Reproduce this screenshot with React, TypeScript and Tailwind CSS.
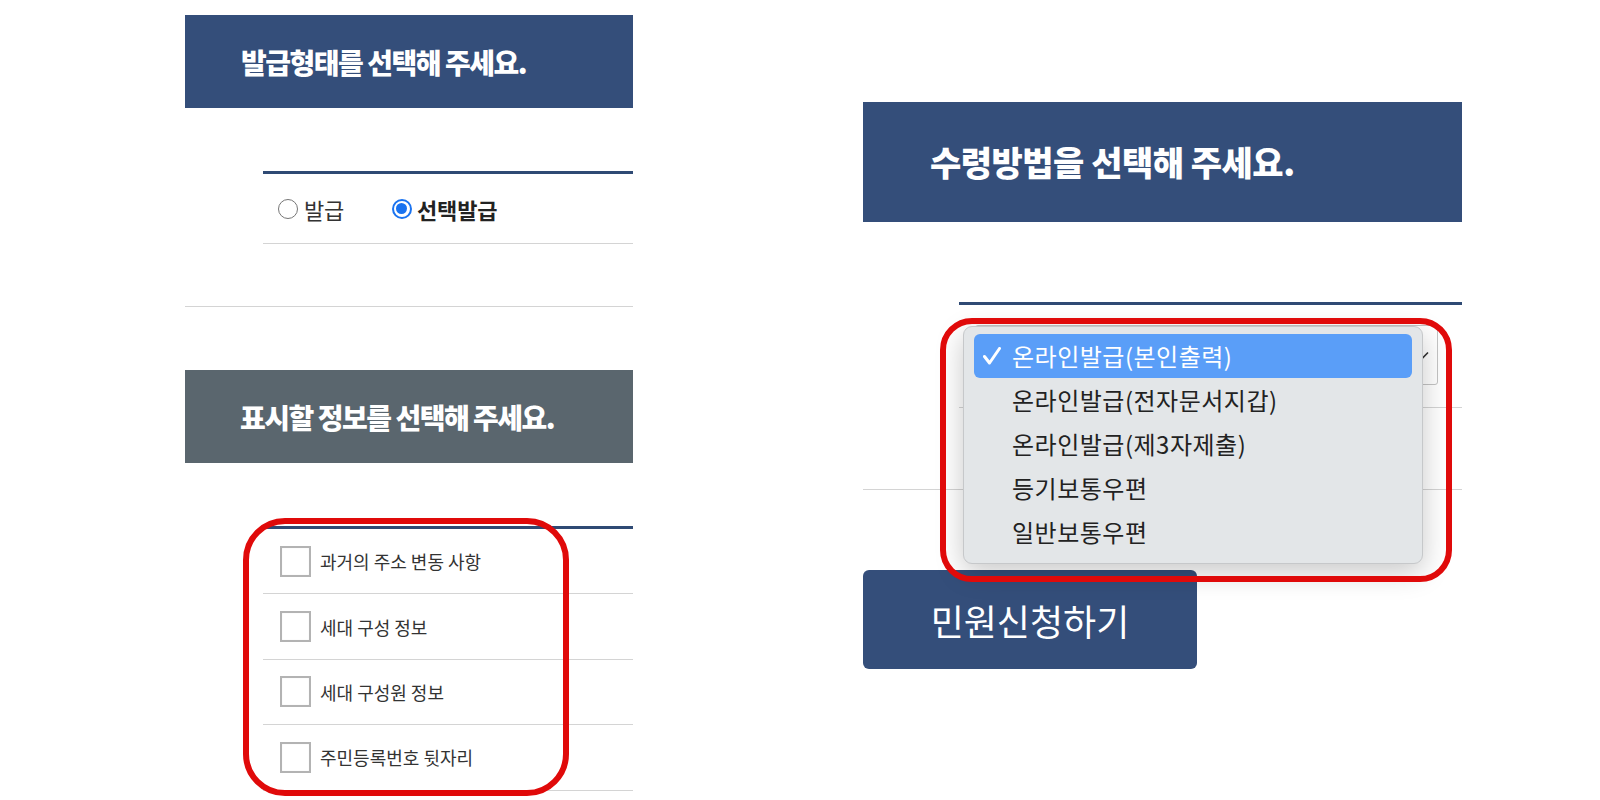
import React from "react";

const FONT = "font-['Noto_Sans_CJK_KR','Noto_Sans',sans-serif]";

function Radio({ checked }: { checked?: boolean }) {
  if (checked) {
    return (
      <span className="w-[20px] h-[20px] rounded-full border-[2px] border-[#1a73f0] bg-white flex items-center justify-center shrink-0">
        <span className="w-[11px] h-[11px] rounded-full bg-[#1a73f0]" />
      </span>
    );
  }
  return <span className="w-[20px] h-[20px] rounded-full border-[1.5px] border-[#767676] bg-white shrink-0" />;
}

function CheckRow({ label }: { label: string }) {
  return (
    <div className="h-[65.4px] border-b border-[#d4d4d4] flex items-center pl-[17px]">
      <span className="w-[31px] h-[31px] border-2 border-[#b3b3b3] bg-white shrink-0 shadow-[inset_0_0_1px_rgba(0,0,0,0.15)]" />
      <span className="ml-[9px] text-[18px] tracking-[0px] text-[#333] leading-none">{label}</span>
    </div>
  );
}

const options = [
  "온라인발급(본인출력)",
  "온라인발급(전자문서지갑)",
  "온라인발급(제3자제출)",
  "등기보통우편",
  "일반보통우편",
];

export default function App() {
  return (
    <div className={`${FONT} relative w-[1600px] h-[800px] overflow-hidden bg-white flex pl-[185px] gap-[230px]`}>
      {/* Left column */}
      <div className="w-[448px] shrink-0 pt-[15px] flex flex-col">
        <div className="h-[93px] bg-[#344e7a] flex items-center pl-[56px]">
          <h2 className="text-white text-[28px] font-black tracking-[-1.5px] leading-none">발급형태를 선택해 주세요.</h2>
        </div>
        <div className="mt-[63px] ml-[78px] border-t-[3px] border-[#2f4a74]">
          <div className="h-[70px] border-b border-[#d4d4d4] flex items-center pl-[15px]">
            <Radio />
            <span className="ml-[6px] text-[22px] text-[#333] leading-none tracking-[-0.3px]">발급</span>
            <span className="ml-[48px]" />
            <Radio checked />
            <span className="ml-[5px] text-[22px] font-bold text-[#222] leading-none tracking-[-0.1px]">선택발급</span>
          </div>
        </div>
        <div className="mt-[62px] border-t border-[#d4d4d4]" />
        <div className="mt-[63px] h-[93px] bg-[#5a666e] flex items-center pl-[55px]">
          <h2 className="text-white text-[28px] font-black tracking-[-1.5px] leading-none">표시할 정보를 선택해 주세요.</h2>
        </div>
        <div className="mt-[63px] ml-[78px] border-t-[3px] border-[#2f4a74]">
          <CheckRow label="과거의 주소 변동 사항" />
          <CheckRow label="세대 구성 정보" />
          <CheckRow label="세대 구성원 정보" />
          <CheckRow label="주민등록번호 뒷자리" />
        </div>
      </div>

      {/* Right column */}
      <div className="relative w-[599px] shrink-0 pt-[102px] flex flex-col">
        <div className="h-[120px] bg-[#344e7a] flex items-center pl-[67px]">
          <h2 className="text-white text-[34px] font-black tracking-[-0.5px] leading-none">수령방법을 선택해 주세요.</h2>
        </div>
        <div className="mt-[80px] ml-[96px] border-t-[3px] border-[#2f4a74]">
          <div className="h-[103px] border-b border-[#d4d4d4] pt-[20px] pl-[16px] pr-[24px]">
            <div className="h-[60px] border border-[#c4c4c4] rounded-[3px] bg-white flex items-center justify-end pr-[8px]">
              <svg width="12" height="8" viewBox="0 0 12 8" fill="none">
                <path d="M1 1.5L6 6.5L11 1.5" stroke="#333" strokeWidth="1.6" />
              </svg>
            </div>
          </div>
        </div>
        <div className="mt-[81px] border-t border-[#d4d4d4]" />
        <button className="mt-[80px] w-[334px] h-[99px] rounded-[6px] bg-[#344e7a] text-white text-[36px] leading-none tracking-[0px] flex items-center justify-center">
          민원신청하기
        </button>

        {/* Dropdown popup */}
        <div className="absolute left-[100px] top-[326px] w-[460px] h-[238px] rounded-[9px] border border-[#c6c8ca] bg-[#e3e6e8] shadow-[0_8px_28px_rgba(0,0,0,0.22)] px-[10px] pt-[7px]">
          {options.map((o, i) => (
            <div
              key={o}
              className={
                i === 0
                  ? "h-[44px] rounded-[6px] bg-[#5a9ef8] text-white flex items-center pl-[9px]"
                  : "h-[44px] text-[#222] flex items-center pl-[9px]"
              }
            >
              <span className="w-[29px] shrink-0 flex items-center">
                {i === 0 && (
                  <svg width="18" height="18" viewBox="0 0 18 18" fill="none">
                    <path d="M1.5 9.5L6.5 16L16.5 1.5" stroke="white" strokeWidth="3" strokeLinecap="round" strokeLinejoin="round" />
                  </svg>
                )}
              </span>
              <span className="text-[24px] leading-none tracking-[0.5px]">{o}</span>
            </div>
          ))}
        </div>
      </div>

      {/* Red annotation rings */}
      <div className="absolute left-[243px] top-[518px] w-[326px] h-[278px] border-[6px] border-[#e00a0a] rounded-[42px] pointer-events-none" />
      <div className="absolute left-[940px] top-[318px] w-[512px] h-[264px] border-[6px] border-[#e00a0a] rounded-[32px] pointer-events-none" />
    </div>
  );
}
